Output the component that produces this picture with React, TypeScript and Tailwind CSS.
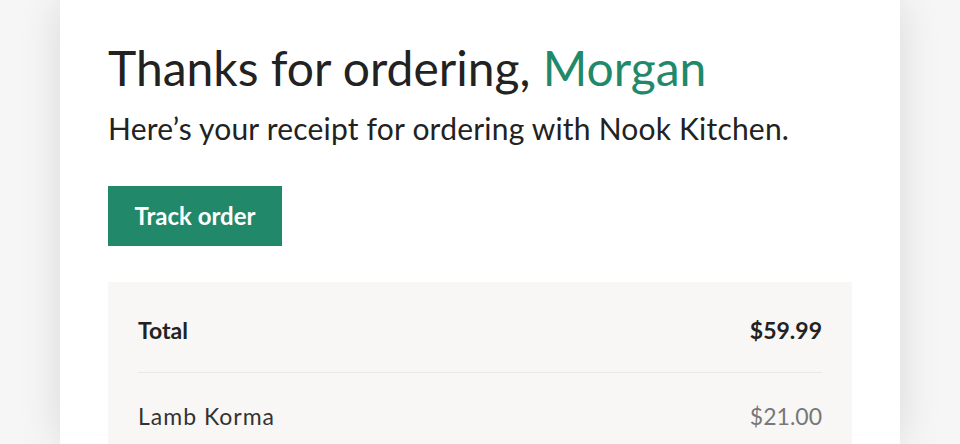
import React from "react";

const font = { fontFamily: "Lato, 'Open Sans', sans-serif" };

export default function App() {
  return (
    <div className="min-h-screen h-[444px] overflow-hidden bg-[#f6f6f6] flex justify-center" style={font}>
      <div className="w-[840px] bg-white shadow-[0_0_40px_rgba(0,0,0,0.12)] px-12 pt-[38px]">
        <h1 className="text-[48px] leading-[60px] text-[#222]">
          Thanks for ordering, <span className="text-[#21896a]">Morgan</span>
        </h1>
        <p className="mt-[12px] text-[30px] leading-[36px] tracking-[0.2px] text-[#222]">
          Here’s your receipt for ordering with Nook Kitchen.
        </p>
        <button className="mt-[40px] h-[60px] w-[174px] bg-[#21896a] text-white text-[24px] font-bold">
          Track order
        </button>
        <div className="mt-[36px] bg-[#f8f7f5] px-[30px]">
          <div className="flex justify-between items-center pt-[34px] pb-[28px] leading-[28px] border-b border-[#e6ebe8] text-[23px] font-bold text-[#222]">
            <span>Total</span>
            <span>$59.99</span>
          </div>
          <div className="flex justify-between items-center pt-[29px] pb-[30px] leading-[28px] text-[23px]">
            <span className="text-[#333] tracking-[1px]">Lamb Korma</span>
            <span className="text-[#777]">$21.00</span>
          </div>
        </div>
      </div>
    </div>
  );
}
